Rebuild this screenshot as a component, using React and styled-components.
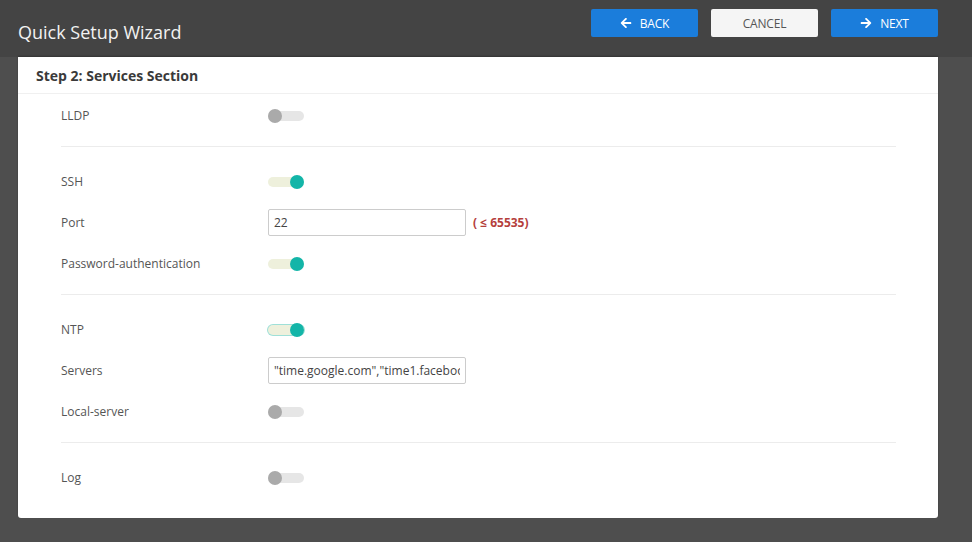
import React from 'react';
import styled, {createGlobalStyle} from 'styled-components';
import {FaArrowLeft, FaArrowRight} from 'react-icons/fa';

const GlobalStyle = createGlobalStyle`
    html, body {
        margin: 0;
        padding: 0;
        background: #4e4e4e;
        font-family: "Open Sans", "Liberation Sans", sans-serif;
    }
`

const Page = styled.div`
    width: 972px;
    height: 542px;
    background: #4e4e4e;
    overflow: hidden;
`
const TopBar = styled.div`
    height: 57px;
    background: #444444;
    display: flex;
    align-items: flex-start;
    padding: 0 34px 0 18px;
    box-sizing: border-box;
`
const Title = styled.h1`
    margin: 20px 0 0;
    font-size: 18px;
    font-weight: 400;
    color: #f2f2f2;
    flex: 1;
`
const Buttons = styled.div`
    display: flex;
    gap: 13px;
    margin-top: 9px;
`
const Button = styled.button`
    width: 107px;
    height: 28px;
    border: none;
    border-radius: 2px;
    display: flex;
    align-items: center;
    justify-content: center;
    gap: 8px;
    font-family: "Open Sans", "Liberation Sans", sans-serif;
    font-size: 12px;
    text-transform: uppercase;
    letter-spacing: -0.2px;
    background: ${p => p.$primary ? '#1b7ddb' : '#f5f5f5'};
    color: ${p => p.$primary ? '#ffffff' : '#555555'};
    svg {
        font-size: 12px;
    }
`
const Card = styled.div`
    margin: 0 34px 0 18px;
    background: #ffffff;
    border-radius: 0 0 3px 3px;
    box-shadow: 0 -1px 2px rgba(0,0,0,0.25);
`
const CardHeader = styled.div`
    height: 36px;
    border-bottom: 1px solid #f0f0f0;
    padding: 0 18px;
    display: flex;
    align-items: center;
    font-size: 14px;
    font-weight: 700;
    color: #3a3a3a;
`
const CardBody = styled.div`
    padding: 0 42px 0 43px;
`
const Group = styled.div`
    padding: ${p => p.$first ? '1px 0 10px' : p.$last ? '14px 0 20px' : '14px 0 10px'};
    border-bottom: ${p => p.$last ? 'none' : '1px solid #ececec'};
`
const Row = styled.div`
    height: 41px;
    display: flex;
    align-items: center;
`
const Label = styled.div`
    width: 207px;
    font-size: 12px;
    color: #555555;
`
const Toggle = styled.div`
    position: relative;
    width: 36px;
    height: 10px;
    border-radius: 5px;
    background: ${p => p.$on ? '#eef0dc' : '#e6e6e6'};
    box-shadow: ${p => p.$focus ? '0 0 0 1px #9fe0d8' : 'none'};
    &::after {
        content: '';
        position: absolute;
        top: -2px;
        left: ${p => p.$on ? '22px' : '0'};
        width: 14px;
        height: 14px;
        border-radius: 50%;
        background: ${p => p.$on ? '#13b5a8' : '#aaaaaa'};
    }
`
const Input = styled.input`
    width: 198px;
    height: 27px;
    box-sizing: border-box;
    border: 1px solid #cccccc;
    border-radius: 2px;
    padding: 0 5px;
    font-family: "Open Sans", "Liberation Sans", sans-serif;
    font-size: 12px;
    color: #444444;
    outline: none;
`
const Hint = styled.span`
    margin-left: 7px;
    font-size: 12px;
    font-weight: 700;
    color: #b5403c;
`

const App = () => {
    return (
        <Page>
            <GlobalStyle />
            <TopBar>
                <Title>Quick Setup Wizard</Title>
                <Buttons>
                    <Button $primary><FaArrowLeft />Back</Button>
                    <Button>Cancel</Button>
                    <Button $primary><FaArrowRight />Next</Button>
                </Buttons>
            </TopBar>
            <Card>
                <CardHeader>Step 2: Services Section</CardHeader>
                <CardBody>
                    <Group $first>
                        <Row><Label>LLDP</Label><Toggle /></Row>
                    </Group>
                    <Group>
                        <Row><Label>SSH</Label><Toggle $on /></Row>
                        <Row><Label>Port</Label><Input defaultValue="22" /><Hint>( ≤ 65535)</Hint></Row>
                        <Row><Label>Password-authentication</Label><Toggle $on /></Row>
                    </Group>
                    <Group>
                        <Row><Label>NTP</Label><Toggle $on $focus /></Row>
                        <Row><Label>Servers</Label><Input defaultValue={'"time.google.com","time1.facebook.com"'} /></Row>
                        <Row><Label>Local-server</Label><Toggle /></Row>
                    </Group>
                    <Group $last>
                        <Row><Label>Log</Label><Toggle /></Row>
                    </Group>
                </CardBody>
            </Card>
        </Page>
    );
};

export default App;
